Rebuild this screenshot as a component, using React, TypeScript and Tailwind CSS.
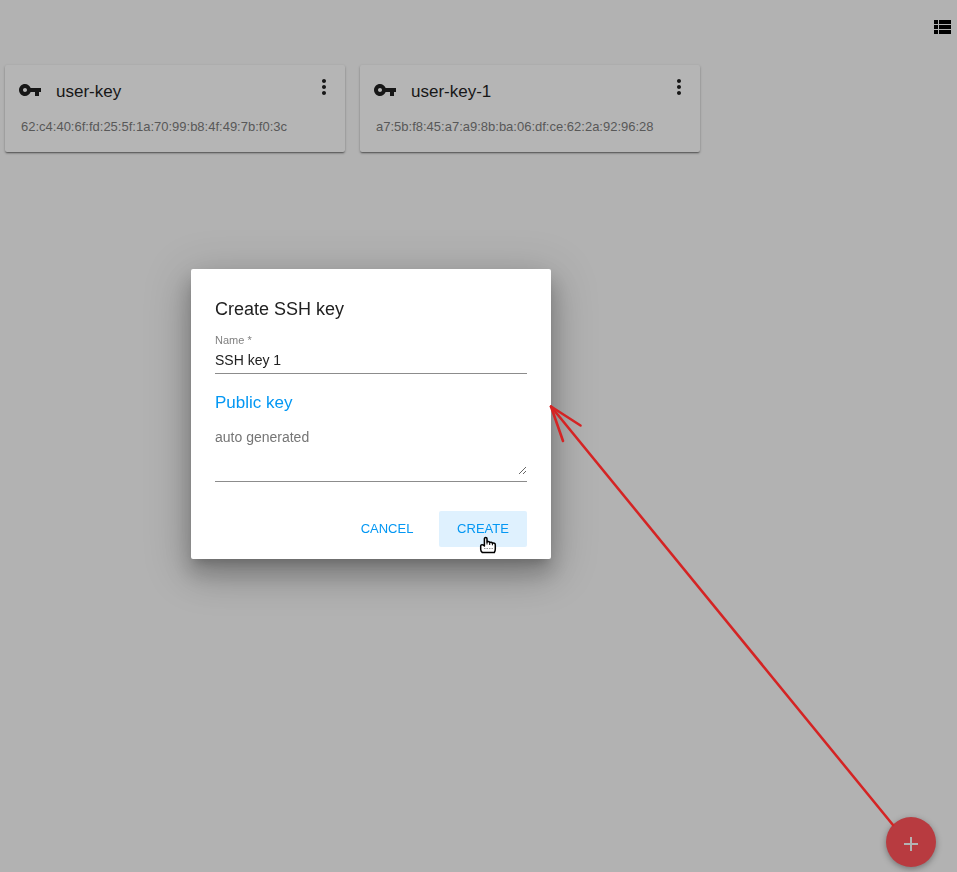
import { useState } from "react";

type SshKey = { name: string; fingerprint: string };

const keys: SshKey[] = [
  { name: "user-key", fingerprint: "62:c4:40:6f:fd:25:5f:1a:70:99:b8:4f:49:7b:f0:3c" },
  { name: "user-key-1", fingerprint: "a7:5b:f8:45:a7:a9:8b:ba:06:df:ce:62:2a:92:96:28" },
];

function Icon({ path, className = "" }: { path: string; className?: string }) {
  return (
    <svg viewBox="0 0 24 24" className={`size-6 fill-current ${className}`} aria-hidden="true">
      <path d={path} />
    </svg>
  );
}

const KEY =
  "M12.65 10C11.83 7.67 9.61 6 7 6c-3.31 0-6 2.69-6 6s2.69 6 6 6c2.61 0 4.83-1.67 5.65-4H17v4h4v-4h2v-4H12.65zM7 14c-1.1 0-2-.9-2-2s.9-2 2-2 2 .9 2 2-.9 2-2 2z";
const MORE =
  "M12 8c1.1 0 2-.9 2-2s-.9-2-2-2-2 .9-2 2 .9 2 2 2zm0 2c-1.1 0-2 .9-2 2s.9 2 2 2 2-.9 2-2-.9-2-2-2zm0 6c-1.1 0-2 .9-2 2s.9 2 2 2 2-.9 2-2-.9-2-2-2z";
const LIST =
  "M4 14h4v-4H4v4zm0 5h4v-4H4v4zM4 9h4V5H4v4zm5 5h12v-4H9v4zm0 5h12v-4H9v4zM9 5v4h12V5H9z";
const PLUS = "M19 13h-6v6h-2v-6H5v-2h6V5h2v6h6v2z";

function KeyCard({ name, fingerprint }: SshKey) {
  return (
    <article className="w-[340px] rounded-[2px] bg-[#b5b5b5] pt-2.5 pr-[9px] pb-[15px] pl-[13px] shadow-[0_1px_3px_rgba(0,0,0,0.2),0_1px_1px_rgba(0,0,0,0.14),0_2px_2px_-1px_rgba(0,0,0,0.35)]">
      <header className="flex items-start">
        <Icon path={KEY} className="mt-[3px] text-[#171717]" />
        <h2 className="mt-[5px] ml-3.5 flex-1 text-[17px] leading-6 text-[#171717]">{name}</h2>
        <button type="button" aria-label={`Actions for ${name}`} className="text-[#171717]">
          <Icon path={MORE} />
        </button>
      </header>
      <p className="mt-[13px] ml-[3px] text-[13px] leading-5 text-[#585858]">{fingerprint}</p>
    </article>
  );
}

function CreateKeyDialog() {
  const [name, setName] = useState("SSH key 1");
  return (
    <div className="fixed inset-0 flex items-center justify-center pr-[215px] pb-11">
      <form
        role="dialog"
        aria-labelledby="dialog-title"
        onSubmit={(e) => e.preventDefault()}
        className="w-[360px] rounded-[2px] bg-white px-6 pt-7 pb-3 shadow-[0_7px_9px_-4px_rgba(0,0,0,0.16),0_13px_19px_2px_rgba(0,0,0,0.14),0_16px_38px_3px_rgba(0,0,0,0.14),0_9px_46px_8px_rgba(0,0,0,0.12)]"
      >
        <h1 id="dialog-title" className="text-lg leading-6 text-[#212121]">
          Create SSH key
        </h1>
        <label htmlFor="key-name" className="mt-[11px] block text-[11px] leading-4 text-[#808080]">
          Name *
        </label>
        <input
          id="key-name"
          required
          value={name}
          onChange={(e) => setName(e.target.value)}
          className="block h-[26px] w-full border-b border-[#8c8c8c] pb-0.5 text-sm text-[#212121] outline-none"
        />
        <label htmlFor="public-key" className="mt-[17px] block text-[17px] leading-6 text-[#0397f3]">
          Public key
        </label>
        <textarea
          id="public-key"
          placeholder="auto generated"
          className="mt-3 block h-12 w-full resize-y text-sm leading-5 outline-none placeholder:text-[#757575]"
        />
        <div className="mt-1.5 border-b border-[#8c8c8c]" />
        <div className="mt-[29px] flex justify-end gap-2">
          <button type="button" className="h-9 w-[88px] rounded-[2px] text-[13px] text-[#0397f3]">
            CANCEL
          </button>
          <button type="submit" className="h-9 w-[88px] rounded-[2px] bg-[#dff1fe] text-[13px] text-[#0397f3]">
            CREATE
          </button>
        </div>
      </form>
    </div>
  );
}

function Annotations() {
  return (
    <svg className="pointer-events-none fixed inset-0 h-full w-full" aria-hidden="true">
      <g stroke="#d42424" strokeWidth="2.6" strokeLinecap="round" fill="none">
        <path d="M551 406.5L893 825" />
        <path d="M563 441L551 406.5L580.5 425.5" strokeLinejoin="round" />
      </g>
      <g transform="translate(479 536.5)">
        <path
          d="M5.4 9.5V2.3C5.4 .6 8 .6 8 2.3V5.6C8.4 4.7 10.5 4.9 10.7 6.1C11.4 5.4 13.2 5.7 13.4 6.8C14.6 6.3 16.3 6.8 16.3 8.2V12.6C16.3 14.4 15.8 15.2 15.3 16.1H3.4C2.3 15.2 1.7 14.5 1.7 13V9.7C1.7 8.4 2.7 7.9 4 8.4L5.4 9.5Z"
          fill="#fff"
          stroke="#000"
          strokeWidth="1.5"
          strokeLinejoin="round"
        />
        <path d="M8 5.5V8M10.7 6.2V8.5M13.4 7V8.8" stroke="#000" strokeWidth="1" />
        <path d="M5 12H14" stroke="#999" strokeWidth="1" strokeDasharray="1.5 1" />
      </g>
    </svg>
  );
}

export default function App() {
  return (
    <div className="min-h-screen bg-[#b2b2b2] font-['Liberation_Sans',Arial,sans-serif]">
      <header className="flex justify-end pt-[15px] pr-[3px]">
        <button type="button" aria-label="List view" className="text-black">
          <Icon path={LIST} />
        </button>
      </header>
      <main className="flex flex-wrap gap-[15px] px-[5px] pt-[26px]">
        {keys.map((key) => (
          <KeyCard key={key.name} {...key} />
        ))}
      </main>
      <button
        type="button"
        aria-label="Add SSH key"
        className="fixed right-[21px] bottom-[5px] flex size-[50px] items-center justify-center rounded-full bg-[#b83b40] pt-1 text-[#b3b3b3] shadow-[0_2px_6px_rgba(0,0,0,0.35)]"
      >
        <Icon path={PLUS} />
      </button>
      <CreateKeyDialog />
      <Annotations />
    </div>
  );
}
